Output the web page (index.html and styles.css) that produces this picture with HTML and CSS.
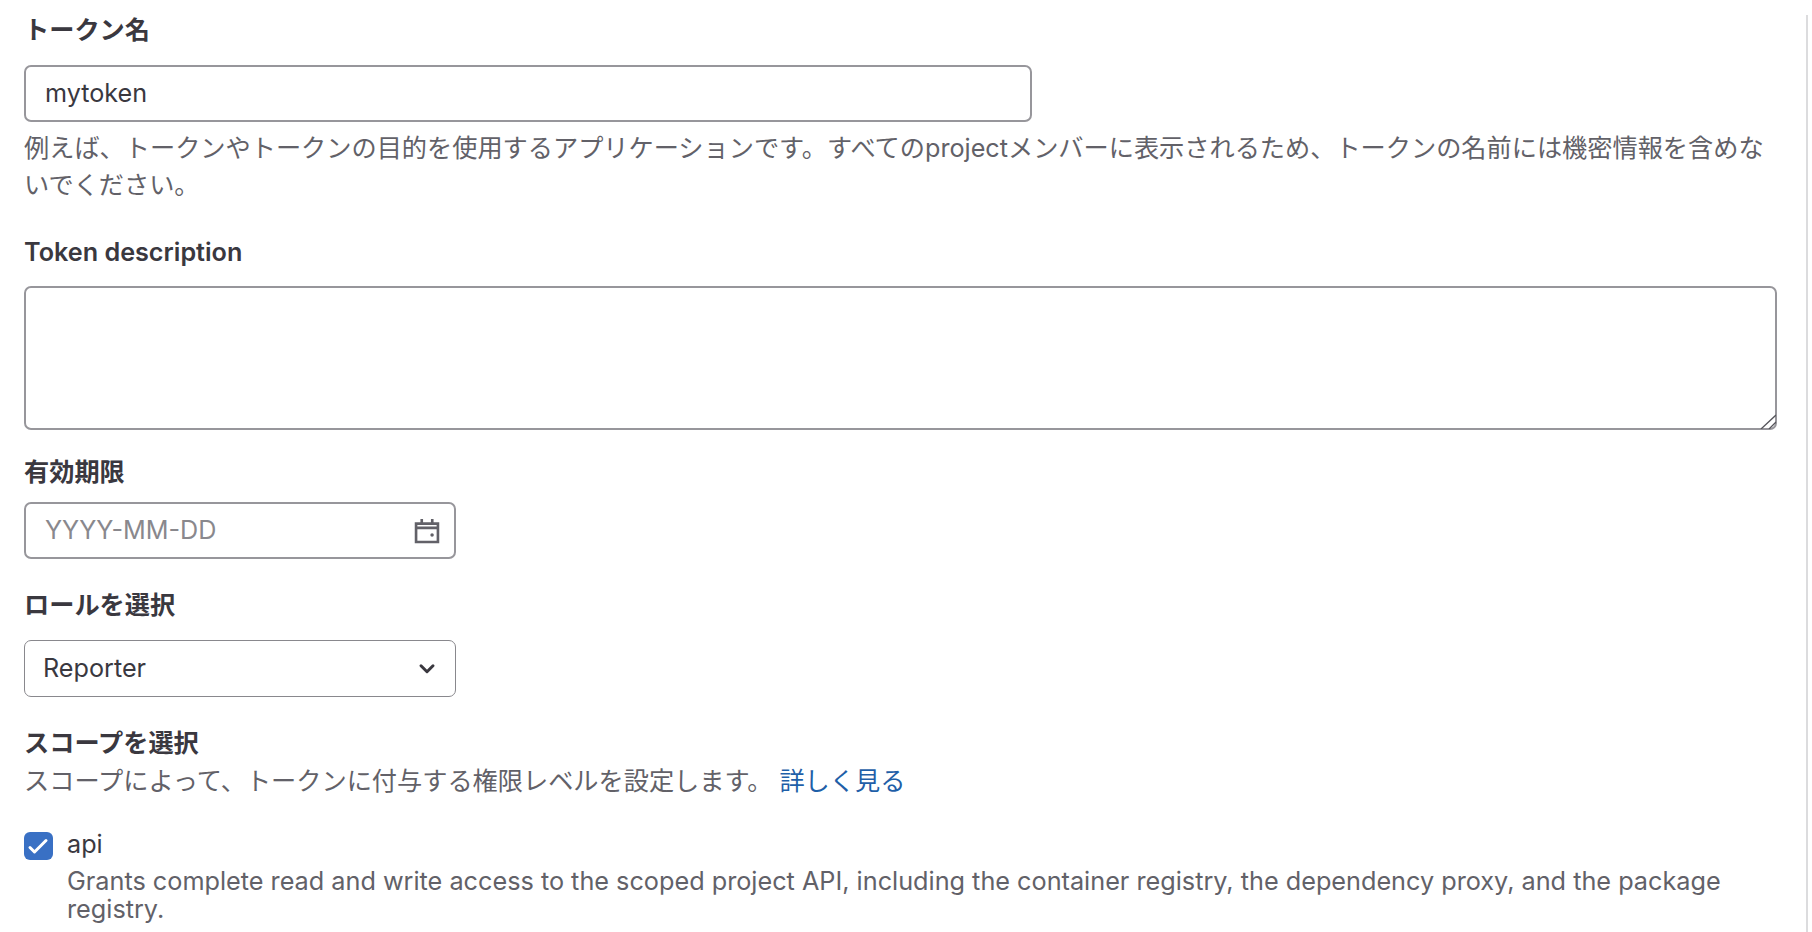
FILE: index.html
```html
<!DOCTYPE html>
<html lang="ja">
<head>
<meta charset="utf-8">
<title>Token</title>
<link rel="stylesheet" href="styles.css">
</head>
<body>
<form class="form">
  <div class="group name-group">
    <label class="label">トークン名</label>
    <input class="input name-input" type="text" value="mytoken">
    <p class="help">例えば、トークンやトークンの目的を使用するアプリケーションです。すべてのprojectメンバーに表示されるため、トークンの名前には機密情報を含めないでください。</p>
  </div>
  <div class="group desc-group">
    <label class="label">Token description</label>
    <div class="textarea-wrap">
      <textarea class="input textarea"></textarea>
      <svg class="grip" viewBox="0 0 16 15" fill="none" stroke="#55545a" stroke-width="1.3"><path d="M1 15L16 1M9 15l7-7"/></svg>
    </div>
  </div>
  <div class="group date-group">
    <label class="label">有効期限</label>
    <div class="date">
      <input class="input date-input" type="text" placeholder="YYYY-MM-DD">
      <svg class="cal" viewBox="0 0 16 16" fill="none" stroke="#626168" stroke-width="1.5"><path d="M1.75 3.75h12.5v10.5H1.75zM1.75 6.2h12.5M5 1.2v2.5M11 1.2v2.5"/><circle cx="10.9" cy="10.3" r="1" fill="#626168" stroke="none"/></svg>
    </div>
  </div>
  <div class="group role-group">
    <label class="label">ロールを選択</label>
    <div class="select">
      <span>Reporter</span>
      <svg class="chev" viewBox="0 0 16 16" fill="none" stroke="#3a383f" stroke-width="2" stroke-linecap="round" stroke-linejoin="round"><path d="M4 6.5l4 4 4-4"/></svg>
    </div>
  </div>
  <div class="group scope-group">
    <label class="label">スコープを選択</label>
    <p class="help scope-help">スコープによって、トークンに付与する権限レベルを設定します。 <a class="link" href="#">詳しく見る</a></p>
    <div class="check">
      <span class="box"><svg viewBox="0 0 29 28" fill="none" stroke="#fff" stroke-width="3" stroke-linecap="round" stroke-linejoin="round"><path d="M6 15.5l4.5 4.5L22 8.5"/></svg></span>
      <div class="check-text">
        <div class="check-name">api</div>
        <div class="check-desc">Grants complete read and write access to the scoped project API, including the container registry, the dependency proxy, and the package registry.</div>
      </div>
    </div>
  </div>
</form>
<div class="rule"></div>
</body>
</html>
```
FILE: styles.css
```css
html, body { margin: 0; height: 100%; overflow: hidden; background: #fff; }
body {
  font-family: Inter, "Noto Sans CJK JP", sans-serif;
  font-size: 25.2px;
  color: #3a383f;
  box-sizing: border-box;
  padding: 0 0 0 24px;
  display: flex;
}
.form { display: flex; flex-direction: column; width: 1753px; flex: none; }
.rule { width: 2px; margin: 15px 0 0 29px; background: #dcdcde; flex: none; }
.group { display: flex; flex-direction: column; align-items: flex-start; }
.label { font-weight: 600; font-size: 25.2px; line-height: 35px; }
.name-group { padding-top: 13px; }
.input {
  box-sizing: border-box;
  font: inherit;
  color: #3a383f;
  border: 2px solid #97969b;
  border-radius: 7px;
  background: #fff;
  padding: 0 19px;
  outline: none;
}
.input::placeholder { color: #89888d; opacity: 1; }
.name-input { width: 1008px; height: 57px; margin-top: 17px; padding-bottom: 2px; }
.help { margin: 8px 0 0; color: #626168; line-height: 37px; }
.desc-group { margin-top: 31px; }
.textarea-wrap { position: relative; margin-top: 16px; width: 100%; }
.textarea { width: 100%; height: 144px; display: block; resize: none; }
.grip { position: absolute; right: 1px; bottom: 1px; width: 16px; height: 15px; }
.date-group { margin-top: 25px; }
.date { position: relative; margin-top: 12px; }
.date-input { width: 432px; height: 57px; display: block; padding-bottom: 2px; }
.cal { position: absolute; right: 15px; top: 15px; width: 28px; height: 28px; }
.role-group { margin-top: 29px; }
.select {
  box-sizing: border-box;
  width: 432px; height: 57px; margin-top: 17px;
  border: 1px solid #89888d; border-radius: 7px;
  display: flex; align-items: center; justify-content: space-between;
  padding: 0 16px 2px 18px;
}
.chev { width: 24px; height: 24px; }
.scope-group { margin-top: 29px; }
.scope-help { margin-top: 2px; }
.link { color: #1f5fa8; text-decoration: none; }
.check { display: flex; gap: 14px; margin-top: 27px; }
.box {
  width: 29px; height: 28px; border-radius: 6px; background: #3970c4;
  margin-top: 5px; flex: none; display: flex;
}
.check-name { line-height: 35px; }
.check-desc { color: #626168; font-size: 25.24px; line-height: 28px; margin-top: 5px; }
```
